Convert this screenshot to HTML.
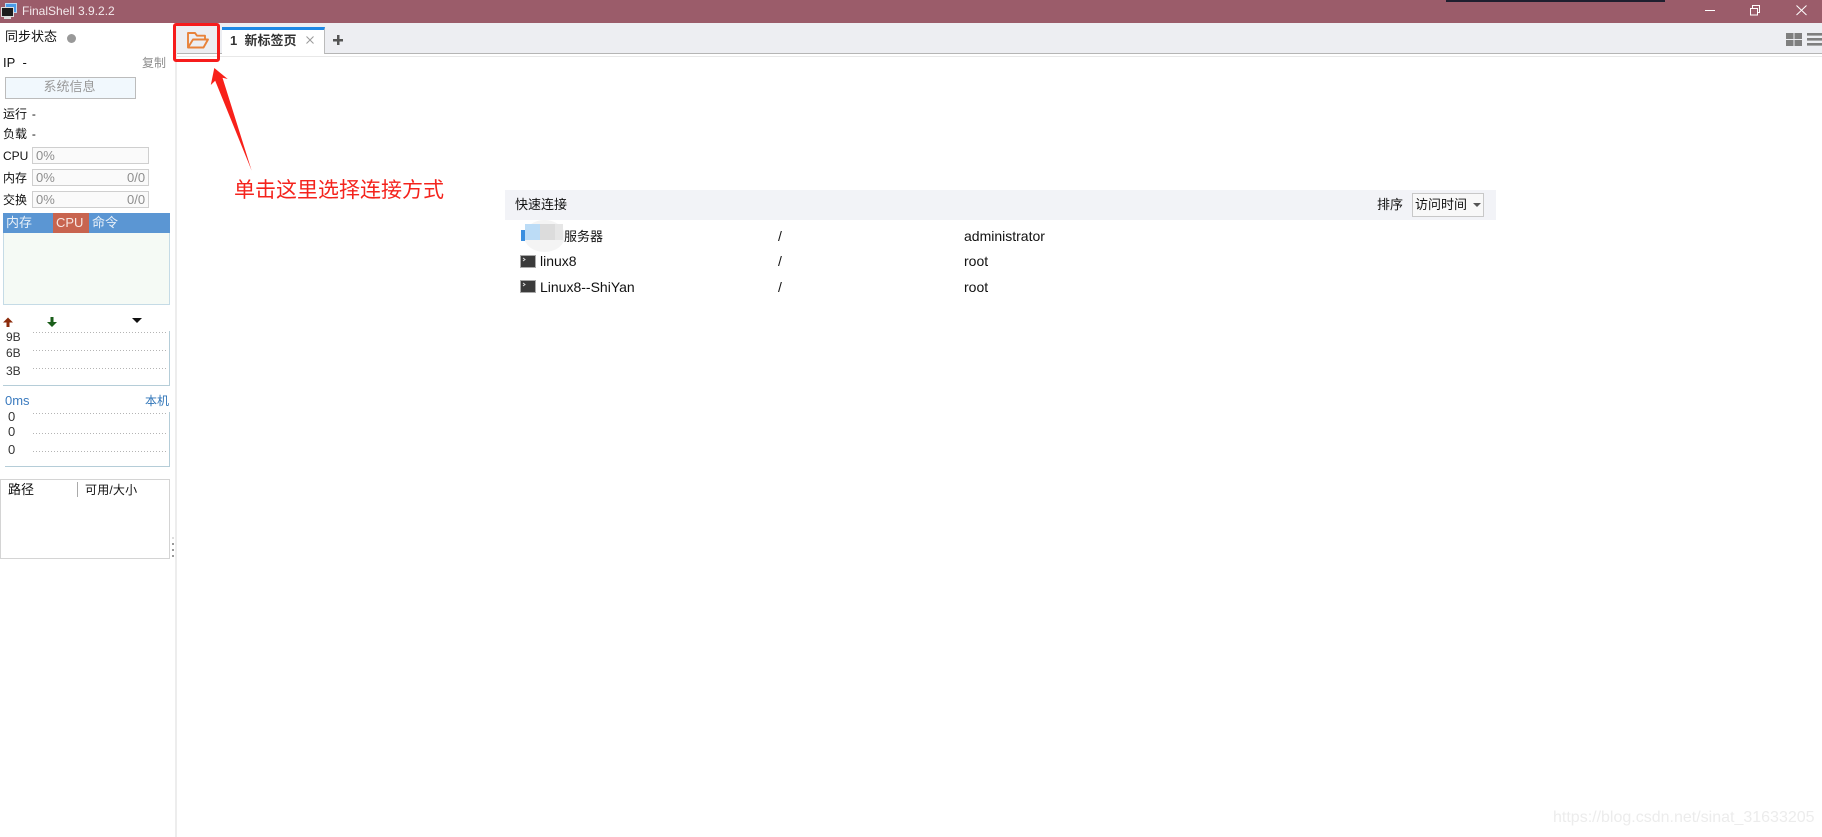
<!DOCTYPE html>
<html lang="zh">
<head>
<meta charset="utf-8">
<title>FinalShell</title>
<style>
html,body{margin:0;padding:0;width:1822px;height:837px;overflow:hidden;background:#fff}
body{position:relative;font-family:"Liberation Sans","Noto Sans CJK SC",sans-serif;font-size:13px;color:#111}
.b{position:absolute;box-sizing:border-box}
.t{position:absolute;white-space:nowrap;line-height:18px;height:18px}
.s{font-size:12px}
.l{font-size:14px}
.g{color:#8e8e8e}
.d{position:absolute;height:1px;background:repeating-linear-gradient(90deg,#b4b4b4 0,#b4b4b4 1px,transparent 1px,transparent 3px)}
svg{position:absolute;overflow:visible}
</style>
</head>
<body>
<!-- title bar -->
<div class="b" style="left:0;top:0;width:1822px;height:23px;background:#9b5c6a"></div>
<div class="b" style="left:1446px;top:0;width:219px;height:2px;background:#1f1f2f"></div>
<svg style="left:0;top:0" width="30" height="23">
<rect x="5.5" y="3.5" width="11" height="9" fill="#4a9be8" stroke="#bcd9f2"/>
<rect x="1.5" y="7.5" width="12" height="9" fill="#1c1c1c" stroke="#ddd"/>
<rect x="4" y="17" width="7" height="2" fill="#ddd"/>
</svg>
<div class="t" style="left:22px;top:2px;color:#f3e9ec;font-size:12px">FinalShell 3.9.2.2</div>
<svg style="left:1700px;top:0" width="122" height="23" fill="none" stroke="#fff">
<path d="M5 10.5H15"/>
<rect x="50.5" y="8.5" width="7" height="6.5"/>
<path d="M52.5 8V5.5H59.5V12.5H58"/>
<path d="M96.5 5.5L106.5 15M106.5 5.5L96.5 15"/>
</svg>

<!-- sidebar -->
<div class="b" style="left:175px;top:23px;width:2px;height:814px;background:#ededed"></div>
<div class="t" style="left:5px;top:28px">同步状态</div>
<div class="b" style="left:67px;top:34px;width:9px;height:9px;border-radius:50%;background:#999"></div>
<div class="t" style="left:3px;top:54px">IP&nbsp;&nbsp;-</div>
<div class="t g s" style="left:142px;top:54px">复制</div>
<div class="b" style="left:5px;top:77px;width:131px;height:22px;border:1px solid #bcbcbc;background:#f1f8fd;text-align:center;line-height:18px;color:#999;padding-right:2px">系统信息</div>
<div class="t s" style="left:3px;top:105px;word-spacing:1.5px">运行 -</div>
<div class="t s" style="left:3px;top:125px;word-spacing:1.5px">负载 -</div>

<div class="t s" style="left:3px;top:147px">CPU</div>
<div class="b" style="left:32px;top:147px;width:117px;height:17px;border:1px solid #cfcfcf;background:#fafafa"></div>
<div class="t g" style="left:36px;top:147px">0%</div>
<div class="t s" style="left:3px;top:169px">内存</div>
<div class="b" style="left:32px;top:169px;width:117px;height:17px;border:1px solid #cfcfcf;background:#fafafa"></div>
<div class="t g" style="left:36px;top:169px">0%</div>
<div class="t g" style="left:127px;top:169px">0/0</div>
<div class="t s" style="left:3px;top:191px">交换</div>
<div class="b" style="left:32px;top:191px;width:117px;height:17px;border:1px solid #cfcfcf;background:#fafafa"></div>
<div class="t g" style="left:36px;top:191px">0%</div>
<div class="t g" style="left:127px;top:191px">0/0</div>

<div class="b" style="left:3px;top:213px;width:167px;height:20px;background:#5b96d3"></div>
<div class="b" style="left:53px;top:213px;width:36px;height:20px;background:#c8644f"></div>
<div class="t" style="left:6px;top:214px;color:#e8f0f8">内存</div>
<div class="t" style="left:56px;top:214px;color:#f7e6e2">CPU</div>
<div class="t" style="left:92px;top:214px;color:#e8f0f8">命令</div>
<div class="b" style="left:3px;top:233px;width:167px;height:72px;background:#f5faf5;border:1px solid #c5dbe6;border-top:0"></div>

<svg style="left:0;top:314px" width="170" height="16">
<path d="M8 3.5L3 8.5H6.5V13H9.5V8.5H13Z" fill="#8b2a0a"/>
<path d="M50.5 3V8H47L52 13L57 8H53.5V3Z" fill="#1a5e1a"/>
<path d="M132 4H142L137 9Z" fill="#111"/>
</svg>
<div class="b" style="left:3px;top:331px;width:167px;height:55px;border-right:1px solid #b5cdd8;border-bottom:1px solid #b5cdd8"></div>
<div class="d" style="left:33px;top:332px;width:134px"></div>
<div class="d" style="left:33px;top:350px;width:134px"></div>
<div class="d" style="left:33px;top:368px;width:134px"></div>
<div class="t s" style="left:6px;top:328px;color:#333">9B</div>
<div class="t s" style="left:6px;top:344px;color:#333">6B</div>
<div class="t s" style="left:6px;top:362px;color:#333">3B</div>

<div class="t" style="left:5px;top:392px;color:#3b7bbf">0ms</div>
<div class="t s" style="left:145px;top:392px;color:#2f74b8">本机</div>
<div class="b" style="left:5px;top:412px;width:165px;height:55px;border-right:1px solid #b5cdd8;border-bottom:1px solid #b5cdd8"></div>
<div class="d" style="left:33px;top:413px;width:134px"></div>
<div class="d" style="left:33px;top:433px;width:134px"></div>
<div class="d" style="left:33px;top:451px;width:134px"></div>
<div class="t" style="left:8px;top:408px;color:#333">0</div>
<div class="t" style="left:8px;top:423px;color:#333">0</div>
<div class="t" style="left:8px;top:441px;color:#333">0</div>

<div class="b" style="left:0;top:479px;width:170px;height:80px;border:1px solid #d4d4d4"></div>
<div class="t" style="left:8px;top:481px">路径</div>
<div class="b" style="left:77px;top:482px;width:1px;height:15px;background:#aaa"></div>
<div class="t s" style="left:85px;top:481px;letter-spacing:.2px">可用/大小</div>
<svg style="left:171px;top:536px" width="4" height="24" fill="#999">
<rect x="1" y="1" width="2" height="2" fill="#ddd"/>
<rect x="1" y="7" width="2" height="2"/><rect x="1" y="13" width="2" height="2"/><rect x="1" y="19" width="2" height="2"/>
</svg>

<!-- tab strip -->
<div class="b" style="left:177px;top:23px;width:1645px;height:30px;background:#edeef2"></div>
<div class="b" style="left:177px;top:53px;width:1645px;height:1px;background:#b5b5b5"></div>
<div class="b" style="left:177px;top:56px;width:1645px;height:1px;background:#e8e8e8"></div>
<div class="b" style="left:222px;top:27px;width:103px;height:27px;background:#fff;border-right:1px solid #bbb;border-top:3px solid #1e88e5"></div>
<div class="t" style="left:230px;top:32px;font-weight:bold;color:#333">1&nbsp;&nbsp;新标签页</div>
<svg style="left:305px;top:35px" width="10" height="10" fill="none" stroke="#999"><path d="M1.5 1.5L8.5 8.5M8.5 1.5L1.5 8.5"/></svg>
<svg style="left:332px;top:34px" width="12" height="12"><path d="M5 1H7.5V5H11V7.5H7.5V11H5V7.5H1V5H5Z" fill="#555"/></svg>
<svg style="left:186px;top:31px" width="24" height="19" fill="none" stroke="#e8823a" stroke-width="1.9" stroke-linejoin="round">
<path d="M2 16.5V2H9L11 4.7H19V7.5"/>
<path d="M2 16.5L7 8.5H22L17.5 16.5Z"/>
</svg>
<svg style="left:1786px;top:33px" width="36" height="14" fill="#7f7f7f">
<rect x="0" y="0" width="7.5" height="6"/><rect x="8.5" y="0" width="7.5" height="6"/>
<rect x="0" y="7" width="7.5" height="6"/><rect x="8.5" y="7" width="7.5" height="6"/>
<rect x="21" y="0" width="15" height="2.6"/><rect x="21" y="5" width="15" height="2.6"/><rect x="21" y="10" width="15" height="2.6"/>
</svg>

<!-- annotation -->
<div class="b" style="left:173px;top:23px;width:47px;height:39px;border:3px solid #f61c1c;border-radius:3px"></div>
<svg style="left:0;top:0" width="300" height="200">
<path d="M214.3 68L227.7 79L222.5 77.7L251.7 170.7L215.2 80.7L210.8 85Z" fill="#f8211a"/>
</svg>
<div class="t" style="left:234px;top:178px;height:26px;line-height:26px;font-size:21px;color:#f4231c">单击这里选择连接方式</div>

<!-- quick connect -->
<div class="b" style="left:505px;top:190px;width:991px;height:30px;background:#f2f3f7"></div>
<div class="t" style="left:515px;top:196px">快速连接</div>
<div class="t" style="left:1377px;top:196px">排序</div>
<div class="b" style="left:1412px;top:193px;width:72px;height:24px;border:1px solid #c8c8c8;background:#f8f8f8"></div>
<div class="t" style="left:1415px;top:196px">访问时间</div>
<svg style="left:1473px;top:203px" width="8" height="5"><path d="M0 0H8L4 4Z" fill="#555"/></svg>

<!-- rows -->
<div class="b" style="left:524px;top:220px;width:41px;height:32px;border-radius:50%;background:#f4f4f4"></div>
<div class="b" style="left:521px;top:230px;width:4px;height:11px;background:#3a8fe0"></div>
<div class="b" style="left:525px;top:224px;width:15px;height:16px;background:#bcdcf6"></div>
<div class="b" style="left:540px;top:224px;width:15px;height:16px;background:#dcdcdc"></div>
<div class="b" style="left:555px;top:224px;width:8px;height:16px;background:#e6e6e6"></div>
<div class="t" style="left:564px;top:228px">服务器</div>
<div class="t l" style="left:778px;top:227px">/</div>
<div class="t l" style="left:964px;top:227px">administrator</div>

<svg style="left:520px;top:255px" width="16" height="14">
<rect x=".5" y=".5" width="15" height="12" fill="#3b3b3b" stroke="#aaa"/><path d="M3 3L5 4.5L3 6" stroke="#ddd" fill="none"/>
</svg>
<div class="t l" style="left:540px;top:252px">linux8</div>
<div class="t l" style="left:778px;top:252px">/</div>
<div class="t l" style="left:964px;top:252px">root</div>

<svg style="left:520px;top:280px" width="16" height="14">
<rect x=".5" y=".5" width="15" height="12" fill="#3b3b3b" stroke="#aaa"/><path d="M3 3L5 4.5L3 6" stroke="#ddd" fill="none"/>
</svg>
<div class="t l" style="left:540px;top:278px">Linux8--ShiYan</div>
<div class="t l" style="left:778px;top:278px">/</div>
<div class="t l" style="left:964px;top:278px">root</div>

<!-- watermark -->
<div class="t" style="left:1553px;top:807px;height:22px;line-height:22px;font-size:16px;color:#ececec">https://blog.csdn.net/sinat_31633205</div>
</body>
</html>
